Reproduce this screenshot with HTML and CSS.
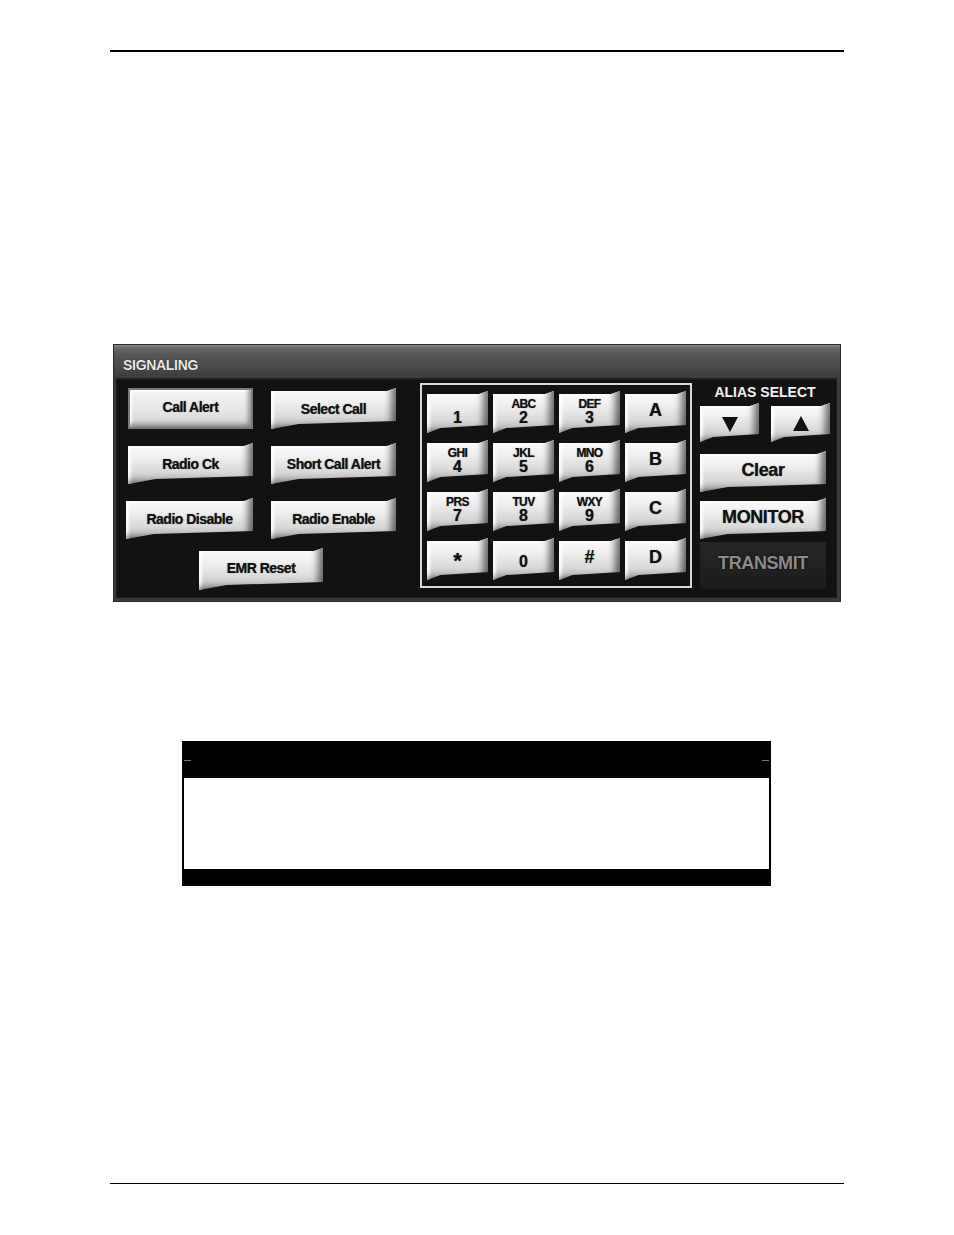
FILE: index.html
```html
<!DOCTYPE html>
<html>
<head>
<meta charset="utf-8">
<link rel="stylesheet" href="styles.css">
</head>
<body>
<div class="page">
  <div class="rule-top"></div>

  <div class="panel">
    <div class="titlebar">SIGNALING</div>
    <div class="panel-body">
      <div class="left">
        <div class="grid">
          <div class="btn pressed">Call Alert</div>
          <div class="btn">Select Call</div>
          <div class="btn">Radio Ck</div>
          <div class="btn">Short Call Alert</div>
          <div class="btn shift">Radio Disable</div>
          <div class="btn">Radio Enable</div>
        </div>
        <div class="emr-row"><div class="btn emr">EMR Reset</div></div>
      </div>

      <div class="keypad">
        <div class="btn key"><span class="num">1</span></div>
        <div class="btn key"><span class="let">ABC</span><span class="num">2</span></div>
        <div class="btn key"><span class="let">DEF</span><span class="num">3</span></div>
        <div class="btn key big"><span class="num">A</span></div>
        <div class="btn key"><span class="let">GHI</span><span class="num">4</span></div>
        <div class="btn key"><span class="let">JKL</span><span class="num">5</span></div>
        <div class="btn key"><span class="let">MNO</span><span class="num">6</span></div>
        <div class="btn key big"><span class="num">B</span></div>
        <div class="btn key"><span class="let">PRS</span><span class="num">7</span></div>
        <div class="btn key"><span class="let">TUV</span><span class="num">8</span></div>
        <div class="btn key"><span class="let">WXY</span><span class="num">9</span></div>
        <div class="btn key big"><span class="num">C</span></div>
        <div class="btn key big"><span class="num star">*</span></div>
        <div class="btn key"><span class="num low">0</span></div>
        <div class="btn key big"><span class="num">#</span></div>
        <div class="btn key big"><span class="num">D</span></div>
      </div>

      <div class="right">
        <div class="alias-label">ALIAS SELECT</div>
        <div class="arrows">
          <div class="btn arrow">
            <svg width="18" height="18" viewBox="0 0 18 18"><polygon points="1,2 17,2 9,17" fill="#111"/></svg>
          </div>
          <div class="btn arrow">
            <svg width="18" height="18" viewBox="0 0 18 18"><polygon points="9,1 17,16 1,16" fill="#111"/></svg>
          </div>
        </div>
        <div class="btn wide">Clear</div>
        <div class="btn wide">MONITOR</div>
        <div class="transmit">TRANSMIT</div>
      </div>
    </div>
  </div>

  <div class="box">
    <div class="box-head"><span class="dash"></span><span class="dash"></span></div>
    <div class="box-body"></div>
    <div class="box-foot"></div>
  </div>

  <div class="rule-bottom"></div>
</div>
</body>
</html>
```

FILE: styles.css
```css
html, body {
  margin: 0;
  padding: 0;
  background: #fff;
}
.page {
  width: 954px;
  height: 1235px;
  position: relative;
  font-family: "Liberation Sans", Arial, sans-serif;
  padding-top: 50px;
  box-sizing: border-box;
}
.rule-top {
  margin-left: 110px;
  width: 734px;
  height: 2px;
  background: #000;
}
.rule-bottom {
  margin-left: 110px;
  margin-top: 297px;
  width: 734px;
  height: 1px;
  background: #000;
}

/* ---------- panel ---------- */
.panel {
  margin-top: 292px;
  margin-left: 113px;
  width: 728px;
  height: 258px;
  background: #3a3a3a;
  box-sizing: border-box;
  border: 1px solid #2a2a2a;
  display: flex;
  flex-direction: column;
}
.titlebar {
  height: 33px;
  box-sizing: border-box;
  padding: 12px 0 0 9px;
  color: #e8e8e8;
  font-size: 14px;
  font-weight: bold;
  letter-spacing: -0.3px;
  background: linear-gradient(180deg, #8a8a8a 0px, #6a6a6a 3px, #555 10px, #4a4a4a 22px, #3b3b3b 33px);
  text-shadow: 0 0 1px #000;
}
.panel-body {
  flex: 1;
  margin: 0 3px 3px 2px;
  background: #121212;
  border-top: 1px solid #222;
  display: flex;
  box-shadow: inset 0 0 0 1px #1c1c1c;
}

/* ---------- generic button ---------- */
.btn {
  display: flex;
  align-items: center;
  justify-content: center;
  color: #111;
  font-weight: bold;
  font-size: 14px;
  letter-spacing: -0.5px;
  background: linear-gradient(180deg, #fdfdfd 0%, #efefef 35%, #d9d9d9 70%, #b5b5b5 100%);
  box-shadow: inset -7px -4px 7px -2px rgba(0,0,0,0.55), inset 3px 3px 3px rgba(255,255,255,0.9);
  clip-path: polygon(0 3px, calc(100% - 9px) 3px, 100% 0, 100% calc(100% - 8px), 22% calc(100% - 5px), 0 100%);
  text-shadow: 0 0 1px rgba(0,0,0,0.6);
  box-sizing: border-box;
}

/* ---------- left ---------- */
.left {
  width: 304px;
  box-sizing: border-box;
  padding: 9px 0 0 12px;
}
.grid {
  display: grid;
  grid-template-columns: 125px 125px;
  grid-auto-rows: 41px;
  column-gap: 18px;
  row-gap: 14px;
}
.btn.pressed {
  clip-path: none;
  border: 2px solid #7a7a7a;
  background: linear-gradient(180deg, #f4f4f4 0%, #e4e4e4 60%, #cfcfcf 100%);
  box-shadow: inset -3px -3px 4px rgba(0,0,0,0.35), inset 2px 2px 2px #fff;
  padding-bottom: 3px;
}
.btn.shift {
  margin-left: -2px;
}
.emr-row {
  padding: 9px 0 0 71px;
}
.btn.emr {
  width: 124px;
  height: 42px;
  padding-bottom: 2px;
}

/* ---------- keypad ---------- */
.keypad {
  margin-top: 4px;
  width: 272px;
  height: 205px;
  box-sizing: border-box;
  border: 2px solid #d8d8d8;
  padding: 6px 4px 6px 5px;
  display: grid;
  grid-template-columns: repeat(4, 61px);
  grid-template-rows: repeat(4, 42px);
  column-gap: 5px;
  row-gap: 7px;
}
.btn.key {
  flex-direction: column;
  justify-content: flex-end;
  padding-bottom: 8px;
}
.let {
  display: block;
  font-size: 12px;
  line-height: 12px;
  height: 12px;
  letter-spacing: -0.6px;
}
.num {
  display: block;
  font-size: 16px;
  line-height: 15px;
  height: 15px;
  letter-spacing: 0;
}
.btn.key.big {
  justify-content: center;
  padding-bottom: 4px;
}
.btn.key.big .num {
  font-size: 18px;
  line-height: 18px;
  height: 18px;
}
.btn.key.big .num.star {
  font-size: 22px;
  line-height: 18px;
  margin-top: 8px;
}
.num.low {
  margin-bottom: 3px;
}

/* ---------- right ---------- */
.right {
  flex: 1;
  box-sizing: border-box;
  padding: 5px 0 0 8px;
  display: flex;
  flex-direction: column;
}
.alias-label {
  width: 130px;
  text-align: center;
  color: #f0f0f0;
  font-size: 14px;
  font-weight: bold;
  letter-spacing: 0;
  height: 18px;
}
.arrows {
  display: flex;
  gap: 12px;
  margin-top: 1px;
}
.btn.arrow {
  width: 59px;
  height: 39px;
  padding-top: 2px;
}
.btn.wide {
  width: 126px;
  height: 41px;
  font-size: 18px;
  letter-spacing: -0.4px;
  margin-top: 9px;
  padding-bottom: 3px;
}
.btn.wide + .btn.wide {
  margin-top: 6px;
}
.transmit {
  margin-top: 3px;
  width: 126px;
  height: 47px;
  background: linear-gradient(180deg, #262626, #1c1c1c);
  color: #8c8c8c;
  font-size: 18px;
  font-weight: bold;
  letter-spacing: -0.4px;
  display: flex;
  align-items: center;
  justify-content: center;
  padding-bottom: 4px;
  box-sizing: border-box;
  text-shadow: 0 0 2px #000;
}

/* ---------- black box ---------- */
.box {
  margin-top: 139px;
  margin-left: 182px;
  width: 589px;
  height: 145px;
  background: #000;
  display: flex;
  flex-direction: column;
}
.box-head {
  height: 37px;
  display: flex;
  justify-content: space-between;
  align-items: flex-start;
  padding: 19px 2px 0 2px;
  box-sizing: border-box;
}
.dash {
  display: block;
  width: 7px;
  height: 1px;
  background: #777;
}
.box-body {
  height: 91px;
  margin: 0 2px;
  background: #fff;
}
.box-foot {
  flex: 1;
}
```
